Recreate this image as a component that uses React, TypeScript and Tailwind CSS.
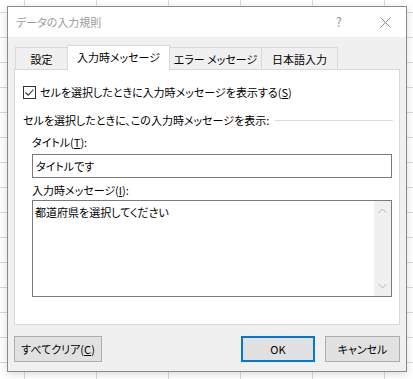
const font = "font-['Noto_Sans_CJK_JP','Noto_Sans',sans-serif] [font-feature-settings:'palt']";

function Tab({ label, active = false, w }: { label: string; active?: boolean; w: string }) {
  if (active) {
    return (
      <div
        className={`relative z-10 -mb-px flex h-[25px] items-center justify-center whitespace-nowrap border border-b-0 border-[#d9d9d9] bg-white -ml-px ${w}`}
      >
        <span className="-mt-[2px]">{label}</span>
      </div>
    );
  }
  return (
    <div className={`flex h-[22px] items-center justify-center whitespace-nowrap border border-b-0 border-[#d9d9d9] bg-[#f0f0f0] -ml-px first:ml-0 ${w}`}>
      {label}
    </div>
  );
}

function CheckBox() {
  return (
    <div className="flex h-[13px] w-[13px] items-center justify-center border border-[#333] bg-white">
      <svg width="11" height="11" viewBox="0 0 11 11">
        <polyline points="1.5,5.5 4.2,8.2 9.5,2.5" fill="none" stroke="#333" strokeWidth="1.1" />
      </svg>
    </div>
  );
}

export default function App() {
  return (
    <div
      className={`h-[379px] w-[413px] overflow-hidden bg-white bg-[linear-gradient(to_right,#d9d9d9_1px,transparent_1px),linear-gradient(to_bottom,#d9d9d9_1px,transparent_1px)] [background-size:72px_25px] [background-position:24px_12px] pl-[7px] pt-[6px] text-[11px] leading-[16px] text-black ${font}`}
    >
      <div className="flex h-[366px] w-[400px] flex-col border border-[#8a8a8a] bg-[#f0f0f0] shadow-[0_2px_8px_rgba(0,0,0,0.15)]">
        {/* Title bar */}
        <div className="flex h-[30px] items-center bg-white pl-[8px] text-[#9a9a9a]">
          <span className="flex-1">データの入力規則</span>
          <span className="mr-[38px] text-[13px]">?</span>
          <svg width="11" height="11" viewBox="0 0 11 11" className="mr-[15px]">
            <path d="M0.5 0.5 L10.5 10.5 M10.5 0.5 L0.5 10.5" stroke="#8a8a8a" strokeWidth="1" />
          </svg>
        </div>

        {/* Body */}
        <div className="flex flex-1 flex-col px-[6px] pt-[8px]">
          {/* Tabs */}
          <div className="flex h-[24px] items-end pl-[1px]">
            <Tab label="設定" w="w-[53px]" />
            <Tab label="入力時メッセージ" w="w-[103px]" active />
            <Tab label="エラー メッセージ" w="w-[93px]" />
            <Tab label="日本語入力" w="w-[77px]" />
          </div>

          {/* Tab panel */}
          <div className="flex h-[256px] flex-col border border-[#d9d9d9] bg-white pl-[8px] pr-[6px] pt-[14px]">
            <div className="flex h-[16px] items-center gap-[4px]">
              <CheckBox />
              <span>
                セルを選択したときに入力時メッセージを表示する(<span className="underline">S</span>)
              </span>
            </div>

            <div className="mt-[12px] flex h-[16px] items-center">
              <span>セルを選択したときに、この入力時メッセージを表示:</span>
              <div className="ml-[6px] h-px flex-1 bg-[#dcdcdc]" />
            </div>

            <div className="pl-[9px]">
              <div className="mt-[6px] h-[16px]">
                タイトル(<span className="underline">T</span>):
              </div>
              <div className="mt-[4px] flex h-[24px] w-[360px] items-center border border-[#7a7a7a] bg-white pl-[3px]">
                タイトルです
              </div>

              <div className="mt-[4px] h-[16px]">
                入力時メッセージ(<span className="underline">I</span>):
              </div>
              <div className="mt-[2px] flex h-[97px] w-[360px] border border-[#7a7a7a] bg-white">
                <div className="flex-1 pl-[2px] pt-[3px]">都道府県を選択してください</div>
                <div className="flex w-[17px] flex-col items-center justify-between bg-[#f0f0f0] py-[7px]">
                  <svg width="9" height="6" viewBox="0 0 9 6">
                    <polyline points="0.5,5 4.5,1 8.5,5" fill="none" stroke="#b5b5b5" strokeWidth="1" />
                  </svg>
                  <svg width="9" height="6" viewBox="0 0 9 6">
                    <polyline points="0.5,1 4.5,5 8.5,1" fill="none" stroke="#b5b5b5" strokeWidth="1" />
                  </svg>
                </div>
              </div>
            </div>
          </div>

          {/* Buttons */}
          <div className="mt-[11px] flex h-[26px]">
            <button className="h-[26px] w-[88px] border border-[#adadad] bg-[#e1e1e1]">
              すべてクリア(<span className="underline">C</span>)
            </button>
            <div className="flex-1" />
            <button className="h-[26px] w-[74px] border-2 border-[#0078d7] bg-[#e1e1e1]">OK</button>
            <button className="ml-[10px] h-[26px] w-[75px] border border-[#adadad] bg-[#e1e1e1]">キャンセル</button>
          </div>
        </div>
      </div>
    </div>
  );
}
